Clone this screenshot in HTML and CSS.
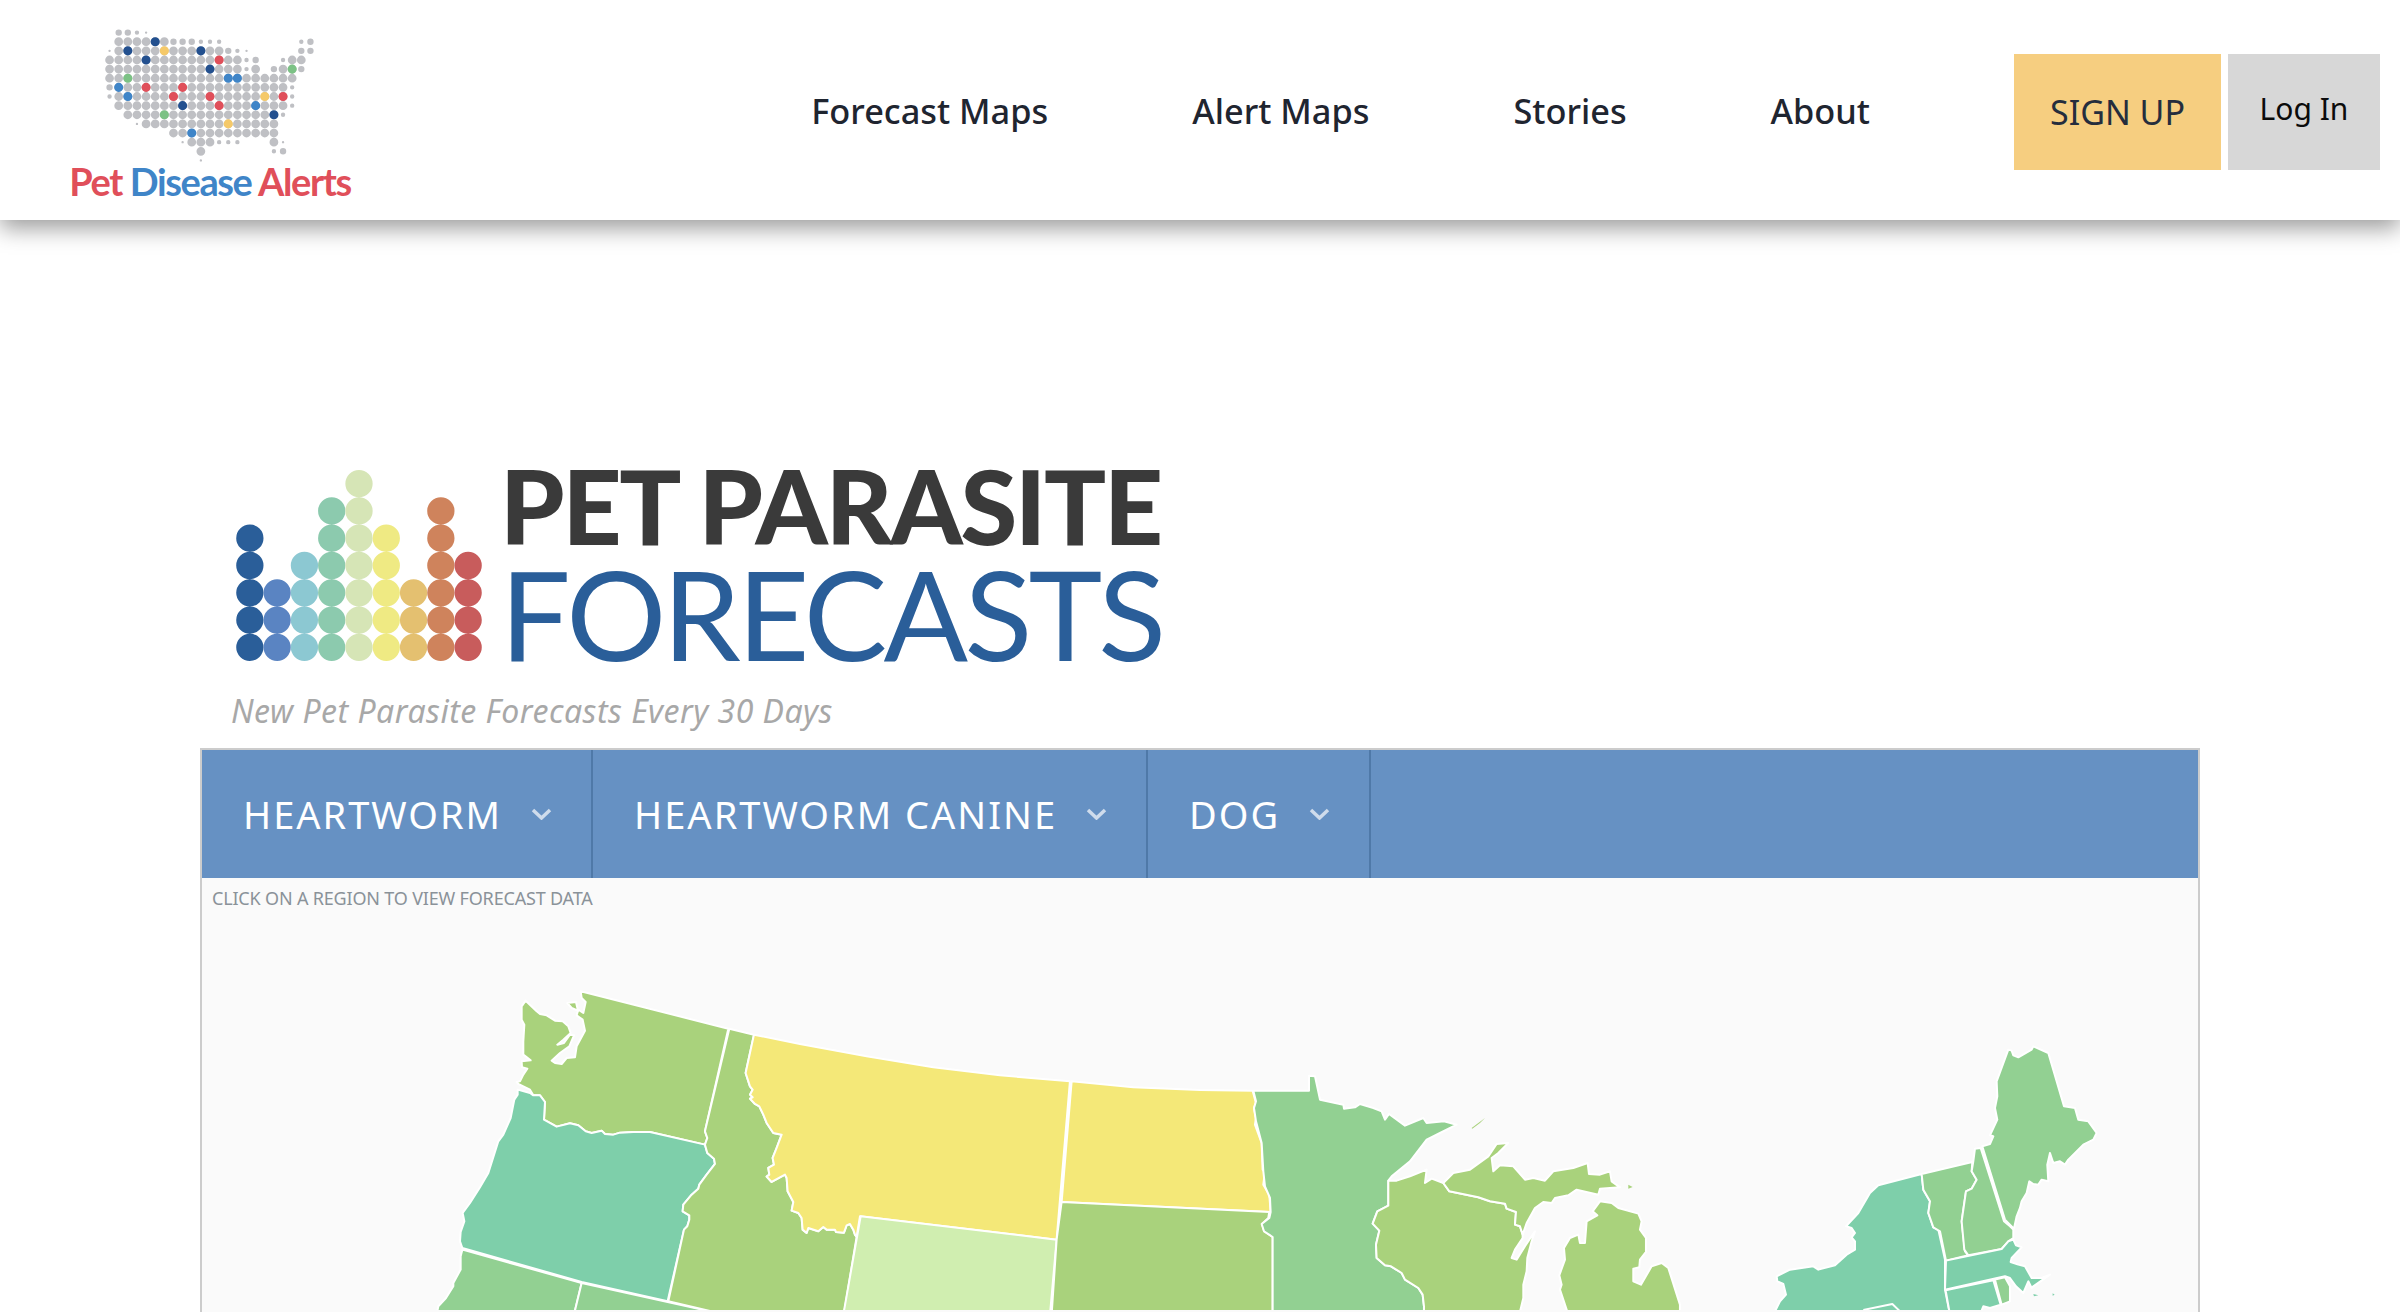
FILE: index.html
```html
<!DOCTYPE html>
<html lang="en">
<head>
  <meta charset="UTF-8">
  <title>Pet Parasite Forecasts</title>
  <link rel="stylesheet" href="styles.css">
</head>
<body>
  <header class="site-header">
    <a class="brand" href="#">
      <svg class="brand-map" viewBox="-.5 -.5 23 15" width="210" height="137" aria-hidden="true">
        <g class="dots" stroke-dasharray="0 1">
          <path class="dot-lg" d="M1 1H6.1M1 2H12.1M0 3H14.1M20 3H21.1M0 4H14.1M16 4H16.1M19 4H20.1M0 5H20.1M1 6H19.1M1 7H19.1M1 8H19.1M2 9H18.1M4 10H18.1M7 11H18.1M9 12H11.1M18 12H18.1M10 13H10.1"/>
          <path class="dot-md" d="M1 0H2.1M7 1H9.1M22 1H22.1M13 2H13.1M21 2H22.1M16 3H16.1M18 4H18.1M21 4H21.1M0 6H0.1M19 13H19.1"/>
          <path class="dot-sm" d="M3 0H3.1M10 1H12.1M21 1H21.1M14 2H14.1M15 3H15.1M19 3H19.1M15 4H15.1M20 6H20.1M0 7H0.1M20 7H20.1M20 8H20.1M19 9H19.1M12 12H14.1M18 13H18.1"/>
          <path class="dot-xs" d="M4 0H4.1M0 2H0.1M15 2H15.1M3 10H3.1M8 12H8.1M19 12H19.1M10 14H10.1"/>
        </g>
        <path class="dot-navy" d="M5 1h0M2 2h0M10 2h0M4 3h0M11 4h0M8 8h0M18 9h0"/>
        <path class="dot-gold" d="M6 2h0M17 7h0M13 10h0"/>
        <path class="dot-red" d="M12 3h0M4 6h0M8 6h0M7 7h0M11 7h0M12 8h0M19 7h0"/>
        <path class="dot-blue" d="M13 5h0M14 5h0M1 6h0M2 7h0M16 8h0M9 11h0"/>
        <path class="dot-green" d="M20 4h0M2 5h0M6 9h0"/>
      </svg>
      <span class="brand-name"><span class="red">Pet</span> <span class="blue">Disease</span> <span class="red">Alerts</span></span>
    </a>
    <nav class="main-nav">
      <a href="#">Forecast Maps</a>
      <a href="#">Alert Maps</a>
      <a href="#">Stories</a>
      <a href="#">About</a>
    </nav>
    <div class="actions">
      <a class="btn btn-signup" href="#">SIGN UP</a>
      <a class="btn btn-login" href="#">Log In</a>
    </div>
  </header>

  <main class="content">
    <div class="forecast-logo">
      <svg class="bars" viewBox="0 0 9 7" width="246" height="191" aria-hidden="true">
        <g stroke-dasharray="0 1">
          <path stroke="#2a5e99" d="M.5 6.5V2.4"/>
          <path stroke="#5a84c2" d="M1.5 6.5V4.4"/>
          <path stroke="#8cc8d2" d="M2.5 6.5V3.4"/>
          <path stroke="#8ccaae" d="M3.5 6.5V1.4"/>
          <path stroke="#d6e5b6" d="M4.5 6.5V.4"/>
          <path stroke="#efea83" d="M5.5 6.5V2.4"/>
          <path stroke="#e4c070" d="M6.5 6.5V4.4"/>
          <path stroke="#cf835c" d="M7.5 6.5V1.4"/>
          <path stroke="#c85c5c" d="M8.5 6.5V3.4"/>
        </g>
      </svg>
      <div class="wordmark">
        <div class="wordmark-top">PET PARASITE</div>
        <div class="wordmark-bottom">FORECASTS</div>
      </div>
    </div>
    <p class="tagline">New Pet Parasite Forecasts Every 30 Days</p>

    <section class="map-panel">
      <div class="filter-bar">
        <div class="filter">HEARTWORM
          <svg viewBox="0 0 21 12" width="21" height="12"><path d="M2 2l8.500 8L19 2"/></svg>
        </div>
        <div class="filter">HEARTWORM CANINE
          <svg viewBox="0 0 21 12" width="21" height="12"><path d="M2 2l8.500 8L19 2"/></svg>
        </div>
        <div class="filter">DOG
          <svg viewBox="0 0 21 12" width="21" height="12"><path d="M2 2l8.500 8L19 2"/></svg>
        </div>
      </div>
      <p class="map-hint">CLICK ON A REGION TO VIEW FORECAST DATA</p>

      <svg class="us-map" viewBox="202 920 1996 392" width="1996" height="392">
        <!-- west -->
        <g transform="translate(420 980) scale(.3333)">
          <polygon class="lvl-3" points="127,815 485,915 462,1010 50,1010 55,985 78,960 100,925 100,915 122,875 122,835"/>
          <polygon class="lvl-3" points="485,915 743,972 860,998 860,1010 462,1010"/>
          <polygon class="lvl-2" points="482,40 925,152 855,460 862,480 855,500 690,462 640,462 600,464 580,470 555,468 545,458 515,465 497,460 475,442 450,436 410,446 372,425 375,372 360,352 340,352 330,335 310,325 295,318 290,312 300,310 310,290 322,272 306,268 305,250 332,247 310,230 310,190 313,140 305,125 305,85 317,68 350,100 360,108 380,112 405,128 428,130 445,145 452,165 430,185 412,200 432,195 450,170 462,172 448,205 420,225 395,248 405,255 425,258 440,240 465,238 470,205 495,158 488,125 470,112 475,95 490,105 497,72 485,60"/>
          <polygon class="lvl-2" points="442,75 468,72 474,98 455,90"/>
          <polygon class="lvl-4" points="293,335 330,345 340,352 360,352 375,372 372,425 410,446 450,436 475,442 497,460 515,465 545,458 555,468 580,470 600,464 640,462 690,462 855,500 862,525 882,542 885,558 860,590 838,620 835,632 815,650 790,680 788,700 808,712 808,725 802,745 792,755 743,970 485,912 127,810 120,790 122,762 133,730 128,705 150,675 180,628 205,585 235,490 250,470 272,420 283,365 293,350"/>
          <polygon class="lvl-2" points="928,152 1002,170 977,285 990,325 998,335 990,350 998,358 990,362 1005,378 1018,385 1030,410 1040,435 1060,465 1085,470 1070,510 1058,540 1062,560 1045,570 1048,590 1040,596 1055,612 1095,590 1100,600 1103,640 1120,672 1115,698 1135,705 1145,720 1148,755 1160,765 1165,750 1195,760 1210,747 1220,755 1245,755 1248,762 1272,764 1280,742 1290,738 1300,755 1305,770 1310,777 1270,1020 960,1020 745,970 792,755 802,745 808,725 808,712 788,700 790,680 815,650 835,632 838,620 860,590 885,558 882,542 862,525 855,500 862,480 855,460"/>
          <polygon class="lvl-1" points="1002,170 1140,198 1340,235 1540,268 1740,292 1950,310 1910,785 1320,715 1310,777 1305,770 1300,755 1290,738 1280,742 1272,764 1248,762 1245,755 1220,755 1210,747 1195,760 1165,750 1160,765 1148,755 1145,720 1135,705 1115,698 1120,672 1103,640 1100,600 1095,590 1055,612 1040,596 1048,590 1045,570 1062,560 1058,540 1070,510 1085,470 1060,465 1040,435 1030,410 1018,385 1005,378 990,362 998,358 990,350 998,335 990,325 977,285"/>
        </g>
        <!-- plains -->
        <g transform="translate(800 1040) scale(.3333)">
          <polygon class="lvl-0" points="182,535 770,605 750,830 130,830"/>
          <polygon class="lvl-1" points="815,130 1000,148 1200,156 1358,158 1368,195 1362,210 1368,240 1365,260 1385,315 1388,395 1395,402 1390,440 1408,470 1412,522 785,492"/>
          <polygon class="lvl-2" points="785,492 1408,522 1405,540 1386,558 1392,578 1418,597 1418,830 755,830 770,605"/>
        </g>
        <!-- great lakes -->
        <g transform="translate(1240 1060) scale(.3333)">
          <polygon class="lvl-3" points="40,98 207,98 207,53 225,55 240,125 310,140 312,152 345,148 360,138 400,150 425,160 435,185 447,168 495,203 550,180 560,195 612,190 650,200 600,225 560,245 510,310 455,355 445,368 445,443 412,460 398,497 418,518 408,560 410,600 435,622 453,625 485,645 495,665 535,690 548,710 552,745 552,770 98,770 98,537 72,520 65,498 88,480 92,462 90,420 75,385 70,340 65,255 48,190 42,150 48,130"/>
          <polygon class="lvl-2" points="445,368 470,368 510,355 560,335 555,375 575,362 610,375 628,400 715,418 750,430 795,437 800,452 828,462 825,500 840,505 848,530 848,540 825,575 815,600 830,605 855,565 885,520 875,550 862,600 860,640 850,680 850,720 838,770 552,770 552,745 548,710 535,690 495,665 485,645 453,625 435,622 410,600 408,560 418,518 398,497 412,460 445,443"/>
          <polygon class="lvl-2" points="610,375 640,345 690,335 745,295 770,258 805,255 775,285 755,300 760,340 780,322 820,325 855,365 880,360 915,368 940,340 1000,330 1043,315 1047,348 1080,350 1110,340 1115,370 1140,388 1080,392 1075,410 1010,395 985,412 945,420 935,435 910,432 885,450 860,495 848,530 840,505 825,500 828,462 800,452 795,437 750,430 715,418 628,400"/>
          <polygon class="lvl-2" points="1080,430 1115,435 1135,450 1195,467 1205,490 1200,515 1218,540 1218,582 1200,605 1198,628 1180,632 1180,670 1203,680 1235,625 1265,615 1285,630 1320,740 1320,770 985,770 960,695 965,680 958,652 975,605 972,570 990,540 1015,530 1020,555 1035,555 1040,490 1072,472 1058,460"/>
          <polygon class="lvl-2 no-line" points="695,210 735,180 720,195 697,212"/>
          <polygon class="lvl-2 no-line" points="1165,380 1178,387 1165,392"/>
        </g>
        <!-- northeast -->
        <g transform="translate(1760 1040) scale(.3333)">
          <polygon class="lvl-4" points="485,408 490,455 510,490 505,525 520,568 535,575 555,665 555,755 570,830 40,830 60,790 78,770 70,738 52,730 50,715 90,695 160,685 175,695 225,682 260,650 285,635 285,610 275,598 285,585 275,570 258,565 295,525 330,465 355,442"/>
          <polyline class="line-only" points="310,816 397,798 418,818"/>
          <polygon class="lvl-3" points="485,408 637,372 635,400 650,425 635,452 618,460 605,550 615,640 625,652 558,668 540,580 520,568 505,525 510,490 490,455"/>
          <polygon class="lvl-3" points="645,332 662,330 732,550 750,565 760,575 760,600 745,610 725,633 625,652 613,635 605,550 618,460 635,452 650,425 635,400 640,370"/>
          <polygon class="lvl-3" points="745,35 755,38 760,52 775,58 815,35 820,25 865,45 912,205 945,210 955,245 985,250 1010,285 1000,305 970,320 925,365 915,380 900,370 880,375 870,345 862,380 865,430 845,425 835,440 820,438 808,430 800,465 785,490 780,510 770,535 762,572 735,545 667,325 690,318 700,295 690,292 712,245 705,210 712,175 710,130"/>
          <polygon class="lvl-4" points="558,668 725,633 745,610 760,605 768,622 785,628 755,660 752,672 775,680 795,685 815,720 845,720 870,710 820,745 815,750 805,730 790,765 768,745 750,720 735,715 555,755"/>
          <polygon class="lvl-4" points="557,757 700,727 722,800 690,810 670,805 660,830 570,830"/>
          <polygon class="lvl-3" points="705,725 735,718 750,745 750,790 725,800"/>
          <polygon class="lvl-4 no-line" points="820,768 835,772 822,775"/>
          <polygon class="lvl-4 no-line" points="878,766 884,770 878,773"/>
        </g>
      </svg>
    </section>
  </main>
</body>
</html>
```

FILE: styles.css
```css
html, body {
  height: 100%;
  margin: 0;
  overflow: hidden;
}

body {
  font-family: "Noto Sans", sans-serif;
  background-color: white;
  color: #1f2530;
}

a {
  text-decoration: none;
  color: inherit;
}

/* Header */
.site-header {
  position: relative;
  display: flex;
  align-items: center;
  height: 220px;
  padding: 4px 20px 0 69px;
  box-sizing: border-box;
  background-color: white;
  box-shadow: 0 8px 22px rgba(0, 0, 0, 0.4);
}

.brand {
  display: flex;
  flex-direction: column;
  align-items: center;
  width: 282px;
  margin-top: 6.5px;
}

.brand-map {
  display: block;
  flex: none;
}

.brand-name {
  margin-top: -4.5px;
  font-family: Lato, sans-serif;
  font-weight: 700;
  font-size: 38px;
  line-height: 43px;
  letter-spacing: -1.4px;
  white-space: nowrap;
}

.brand-name .red {
  color: #e04f5a;
}

.brand-name .blue {
  color: #3f85c8;
}

.brand-map path {
  fill: none;
  stroke-linecap: round;
}

.dot-lg { stroke: #bfc0c4; stroke-width: .96; }
.dot-md { stroke: #bfc0c4; stroke-width: .7; }
.dot-sm { stroke: #bfc0c4; stroke-width: .48; }
.dot-xs { stroke: #bfc0c4; stroke-width: .26; }
.brand-map .dot-navy { stroke: #23508f; stroke-width: 1; }
.brand-map .dot-gold { stroke: #f5c969; stroke-width: 1; }
.brand-map .dot-red { stroke: #e04f5a; stroke-width: 1; }
.brand-map .dot-blue { stroke: #3f85c8; stroke-width: 1; }
.brand-map .dot-green { stroke: #7cc285; stroke-width: 1; }

.main-nav {
  display: flex;
  gap: 144px;
  margin-left: auto;
  padding-bottom: 3px;
  font-size: 34.350px;
  font-weight: 500;
  color: #1f2530;
}

.actions {
  display: flex;
  gap: 7px;
  margin-left: 144px;
}

.btn {
  display: flex;
  align-items: center;
  justify-content: center;
  height: 116px;
  font-size: 34px;
}

.btn-signup {
  width: 207px;
  background-color: #f6ce80;
  color: #252d3d;
}

.btn-login {
  width: 152px;
  padding-bottom: 8px;
  box-sizing: border-box;
  background-color: #d7d7d7;
  font-size: 30px;
  color: #0b0b0b;
}

/* Forecast title */
.content {
  margin: 0 200px;
}

.forecast-logo {
  display: flex;
  align-items: flex-start;
  margin: 250px 0 0 36px;
}

.bars {
  display: block;
  flex: none;
}

.bars path {
  fill: none;
  stroke-width: 1;
  stroke-linecap: round;
}

.wordmark {
  margin: -15px 0 0 18px;
  font-family: Lato, sans-serif;
  white-space: nowrap;
}

.wordmark-top {
  font-size: 103px;
  font-weight: 900;
  line-height: 100px;
  letter-spacing: -2.2px;
  color: #3a3a3a;
}

.wordmark-bottom {
  font-size: 125px;
  font-weight: 400;
  line-height: 117px;
  letter-spacing: -3.7px;
  color: #2a5e99;
}

.tagline {
  margin: 19px 0 0 31px;
  font-size: 32px;
  line-height: 40px;
  letter-spacing: 0.5px;
  font-style: italic;
  font-weight: 400;
  color: #a8a8a8;
}

/* Map panel */
.map-panel {
  margin-top: 17px;
  height: 562px;
  border: 2px solid #ccc;
  border-bottom: 0;
  background-color: #fafafa;
}

.filter-bar {
  display: flex;
  height: 128px;
  background-color: #6691c3;
}

.filter {
  display: flex;
  align-items: center;
  gap: 29px;
  padding: 0 39px 0 41px;
  border-right: 2px solid #4f79a8;
  font-size: 38px;
  letter-spacing: 2px;
  color: white;
}

.filter svg {
  fill: none;
  stroke: #cfdcec;
  stroke-width: 3.5;
}

.map-hint {
  height: 40px;
  margin: 0;
  padding-left: 10px;
  font-size: 18px;
  line-height: 40px;
  letter-spacing: -0.18px;
  color: #8a9299;
}

.us-map {
  display: block;
}

.us-map polygon,
.us-map polyline {
  stroke: white;
  stroke-width: 6;
  stroke-linejoin: round;
}

.us-map .no-line {
  stroke: none;
}

.us-map .line-only {
  fill: none;
}

.lvl-0 { fill: #d0eeb0; }
.lvl-1 { fill: #f4e878; }
.lvl-2 { fill: #a9d27c; }
.lvl-3 { fill: #92d092; }
.lvl-4 { fill: #7ecfaa; }
```
